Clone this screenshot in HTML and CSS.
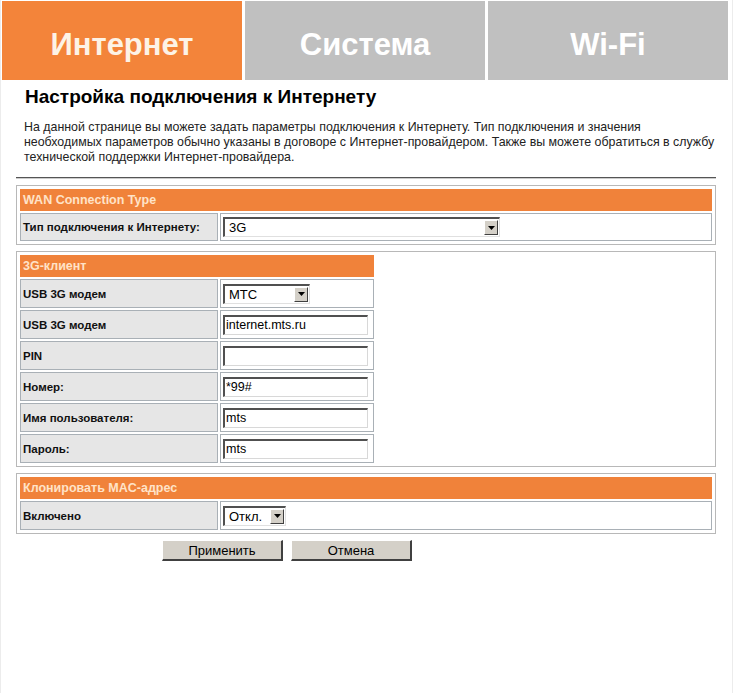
FILE: index.html
```html
<!DOCTYPE html>
<html lang="ru">
<head>
    <meta charset="UTF-8">
    <title>Настройка подключения к Интернету</title>
    <link rel="stylesheet" href="styles.css">
</head>
<body>
<div id="page">
    <div class="tabs">
        <div class="tab active">Интернет</div>
        <div class="tab">Система</div>
        <div class="tab">Wi-Fi</div>
    </div>

    <h1 class="title">Настройка подключения к Интернету</h1>
    <p class="intro">На данной странице вы можете задать параметры подключения к Интернету. Тип подключения и значения<br>
        необходимых параметров обычно указаны в договоре с Интернет-провайдером. Также вы можете обратиться в службу<br>
        технической поддержки Интернет-провайдера.</p>
    <div class="rule"></div>

    <div class="box">
        <table class="grid">
            <tr><th colspan="2">WAN Connection Type</th></tr>
            <tr class="row-wan">
                <td class="lbl">Тип подключения к Интернету:</td>
                <td class="val">
                    <span class="combo combo-wide"><span class="combo-text">3G</span><span class="combo-btn"><svg width="7" height="4" viewBox="0 0 7 4"><path d="M0 0h7L3.5 4z" fill="#000"/></svg></span></span>
                </td>
            </tr>
        </table>
    </div>

    <div class="box">
        <table class="grid narrow">
            <tr><th colspan="2">3G-клиент</th></tr>
            <tr>
                <td class="lbl">USB 3G модем</td>
                <td class="val">
                    <span class="combo combo-mid"><span class="combo-text">МТС</span><span class="combo-btn"><svg width="7" height="4" viewBox="0 0 7 4"><path d="M0 0h7L3.5 4z" fill="#000"/></svg></span></span>
                </td>
            </tr>
            <tr>
                <td class="lbl">USB 3G модем</td>
                <td class="val"><input type="text" class="field" value="internet.mts.ru"></td>
            </tr>
            <tr>
                <td class="lbl">PIN</td>
                <td class="val"><input type="text" class="field" value=""></td>
            </tr>
            <tr>
                <td class="lbl">Номер:</td>
                <td class="val"><input type="text" class="field" value="*99#"></td>
            </tr>
            <tr>
                <td class="lbl">Имя пользователя:</td>
                <td class="val"><input type="text" class="field" value="mts"></td>
            </tr>
            <tr>
                <td class="lbl">Пароль:</td>
                <td class="val"><input type="text" class="field" value="mts"></td>
            </tr>
        </table>
    </div>

    <div class="box">
        <table class="grid">
            <tr><th colspan="2">Клонировать MAC-адрес</th></tr>
            <tr>
                <td class="lbl">Включено</td>
                <td class="val">
                    <span class="combo combo-small"><span class="combo-text">Откл.</span><span class="combo-btn"><svg width="7" height="4" viewBox="0 0 7 4"><path d="M0 0h7L3.5 4z" fill="#000"/></svg></span></span>
                </td>
            </tr>
        </table>
    </div>

    <div class="actions">
        <button class="btn">Применить</button>
        <button class="btn">Отмена</button>
    </div>
</div>
</body>
</html>
```

FILE: styles.css
```css
body {
    margin: 0;
    background: #fff;
    font-family: "Liberation Sans", Arial, sans-serif;
    color: #000;
}
#page {
    width: 731px;
    height: 693px;
    border-left: 1px solid #ececec;
    border-right: 1px solid #ececec;
}
.tabs {
    display: flex;
    gap: 3px;
    padding: 1px 0 0 1px;
}
.tab {
    width: 240px;
    height: 79px;
    background: #c0c0c0;
    color: #fff;
    font-weight: bold;
    font-size: 31px;
    display: flex;
    align-items: center;
    justify-content: center;
    padding-top: 9px;
    box-sizing: border-box;
}
.tab.active {
    background: #f3843a;
    color: #fdf3e6;
}
.title {
    font-size: 19px;
    margin: 6px 0 0 24px;
    line-height: 22px;
}
.intro {
    font-size: 12.4px;
    line-height: 15px;
    color: #222;
    margin: 12px 0 0 23px;
    white-space: nowrap;
}
.rule {
    margin: 12px 0 0 15px;
    width: 700px;
    border-top: 1px solid #555;
    border-bottom: 1px solid #ccc;
}
.box {
    margin: 6px 0 0 15px;
    width: 700px;
    box-sizing: border-box;
    border: 1px solid #b8b8b8;
    padding: 1px;
}
.grid {
    width: 100%;
    border-spacing: 2px;
    font-size: 11.5px;
}
.grid.narrow {
    width: 358px;
}
.grid th {
    background: #f0823a;
    color: #ffe3c8;
    text-align: left;
    font-size: 12.5px;
    height: 22px;
    padding: 0 0 0 3px;
}
.grid td {
    padding: 0;
}
.lbl {
    width: 194px;
    height: 27px;
    background: #e6e6e6;
    border: 1px solid #a9b0b6;
    font-weight: bold;
    padding-left: 2px !important;
    color: #111;
}
.row-wan .lbl {
    height: 26px;
}
.val {
    border: 1px solid #a9b0b6;
    padding-left: 2px !important;
}
.field {
    width: 145px;
    height: 20px;
    box-sizing: border-box;
    border-top: 2px solid #505050;
    border-left: 2px solid #505050;
    border-right: 1px solid #d8d8d8;
    border-bottom: 1px solid #d8d8d8;
    font-family: "Liberation Sans", Arial, sans-serif;
    font-size: 12.5px;
    padding: 0 1px;
    outline: none;
    vertical-align: middle;
}
.combo {
    display: inline-flex;
    height: 20px;
    box-sizing: border-box;
    border-top: 2px solid #505050;
    border-left: 2px solid #505050;
    border-right: 1px solid #e0e0e0;
    border-bottom: 1px solid #e0e0e0;
    background: #fff;
    vertical-align: middle;
}
.combo-wide { width: 277px; }
.combo-mid { width: 87px; }
.combo-small { width: 63px; }
.combo-text {
    flex: 1;
    font-size: 13px;
    line-height: 17px;
    padding-left: 4px;
}
.combo-btn {
    width: 14px;
    margin: 1px;
    background: #d4d0c8;
    border-top: 1px solid #fff;
    border-left: 1px solid #fff;
    border-right: 1px solid #404040;
    border-bottom: 1px solid #404040;
    box-sizing: border-box;
    display: flex;
    align-items: center;
    justify-content: center;
}
.actions {
    display: flex;
    gap: 8px;
    margin: 6px 0 0 161px;
}
.btn {
    width: 121px;
    height: 21px;
    background: #d4d0c8;
    border-top: 1px solid #fff;
    border-left: 1px solid #fff;
    border-right: 2px solid #404040;
    border-bottom: 2px solid #404040;
    font-family: "Liberation Sans", Arial, sans-serif;
    font-size: 13px;
    padding: 0;
    color: #000;
}
```
